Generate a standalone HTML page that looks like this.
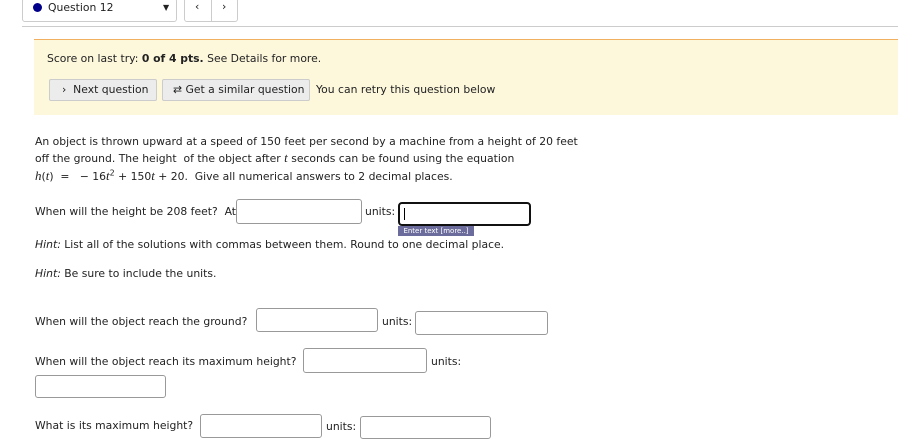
<!DOCTYPE html>
<html><head><style>
body{margin:0;width:898px;height:447px;overflow:hidden;background:#fff;font-family:"DejaVu Sans","Liberation Sans",sans-serif;font-size:10.8px;color:#222;position:relative}
.a{position:absolute;white-space:nowrap;line-height:14px}
.in{position:absolute;border:1px solid #999;border-radius:3px;background:#fff;box-sizing:border-box}
.btn{position:absolute;background:#ececec;border:1px solid #ccc;border-radius:2px;box-sizing:border-box;height:22px;line-height:20px;padding-left:12px;white-space:nowrap}
.m{font-family:"Liberation Serif",serif;font-style:italic;font-size:13px}
</style></head><body>
<div class="a" style="left:22px;top:-2px;width:155px;height:24px;border:1px solid #ccc;border-radius:3px;box-sizing:border-box"></div>
<div class="a" style="left:33px;top:3px;width:9px;height:9px;border-radius:50%;background:#00008b"></div>
<div class="a" style="left:48px;top:1px">Question 12</div>
<div class="a" style="left:163px;top:1px;font-size:8px">▼</div>
<div class="a" style="left:184px;top:-2px;width:54px;height:24px;border:1px solid #ccc;border-radius:3px;box-sizing:border-box"></div>
<div class="a" style="left:211px;top:0;width:1px;height:22px;background:#ccc"></div>
<div class="a" style="left:195px;top:0px">&lsaquo;</div>
<div class="a" style="left:222px;top:0px">&rsaquo;</div>
<div class="a" style="left:22px;top:26px;width:876px;height:1px;background:#ccc"></div>
<div class="a" style="left:34px;top:39px;width:864px;height:75px;background:#fdf8dc;border-top:1px solid #f0b060"></div>
<div class="a" style="left:47px;top:52px">Score on last try: <b>0 of 4 pts.</b> See Details for more.</div>
<div class="btn" style="left:49px;top:79px;width:108px">›&nbsp; Next question</div>
<div class="btn" style="left:162px;top:79px;width:148px;padding-left:10px">⇄ Get a similar question</div>
<div class="a" style="left:316px;top:83px">You can retry this question below</div>
<div class="a" style="left:35px;top:135px">An object is thrown upward at a speed of 150 feet per second by a machine from a height of 20 feet</div>
<div class="a" style="left:35px;top:151px">off the ground. The height &nbsp;of the object after <span class="m">t</span> seconds can be found using the equation</div>
<div class="a" style="left:35px;top:169px"><span class="m">h</span>(<span class="m">t</span>) &nbsp;= &nbsp; − 16<span class="m">t</span><sup style="font-size:8px;line-height:0">2</sup> + 150<span class="m">t</span> + 20. &nbsp;Give all numerical answers to 2 decimal places.</div>
<div class="a" style="left:35px;top:205px">When will the height be 208 feet? &nbsp;At</div>
<div class="in" style="left:236px;top:199px;width:126px;height:25px"></div>
<div class="a" style="left:365px;top:205px">units:</div>
<div class="in" style="left:398px;top:202px;width:133px;height:24px;border:2px solid #111;border-radius:4px"><div style="position:absolute;left:4px;top:4px;width:1px;height:12px;background:#000"></div></div>
<div class="a" style="left:398px;top:226px;width:76px;height:10px;background:#6c6c9c;color:#fff;font-size:7px;line-height:10px;text-align:center">Enter text [more..]</div>
<div class="a" style="left:35px;top:238px"><i>Hint:</i> List all of the solutions with commas between them. Round to one decimal place.</div>
<div class="a" style="left:35px;top:267px"><i>Hint:</i> Be sure to include the units.</div>
<div class="a" style="left:35px;top:315px">When will the object reach the ground?</div>
<div class="in" style="left:256px;top:308px;width:122px;height:24px"></div>
<div class="a" style="left:382px;top:315px">units:</div>
<div class="in" style="left:415px;top:311px;width:133px;height:24px"></div>
<div class="a" style="left:35px;top:355px">When will the object reach its maximum height?</div>
<div class="in" style="left:303px;top:348px;width:124px;height:25px"></div>
<div class="a" style="left:431px;top:355px">units:</div>
<div class="in" style="left:35px;top:375px;width:131px;height:23px"></div>
<div class="a" style="left:35px;top:419px">What is its maximum height?</div>
<div class="in" style="left:200px;top:414px;width:122px;height:24px"></div>
<div class="a" style="left:326px;top:420px">units:</div>
<div class="in" style="left:360px;top:416px;width:131px;height:23px"></div>
</body></html>
